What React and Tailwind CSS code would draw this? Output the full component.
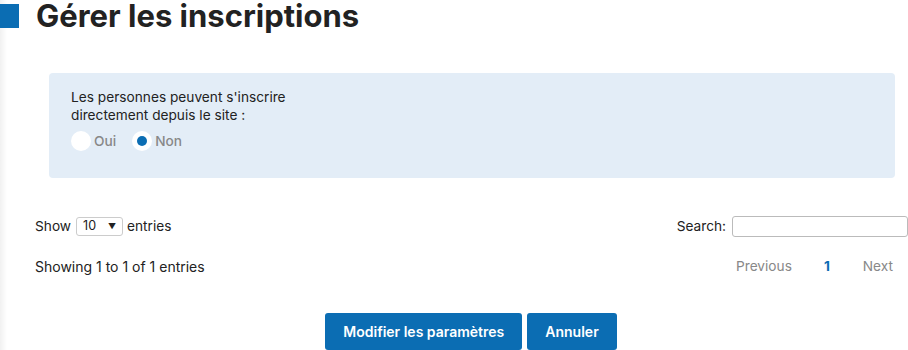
export default function App() {
  return (
    <div className="w-[908px] h-[350px] overflow-hidden bg-white relative text-[#222]" style={{ fontFamily: "Inter, 'Noto Sans', sans-serif" }}>
      <div className="absolute left-0 top-0 bottom-0 w-[7px] bg-gradient-to-r from-[#f1f1f1] to-white" />
      <div className="relative">
        <div className="flex items-center h-[32px]">
          <div className="w-[19px] h-[24px] bg-[#0b6db3]" />
          <h1 className="ml-[17px] text-[31px] font-bold text-[#222] leading-[32px]">Gérer les inscriptions</h1>
        </div>
        <div className="ml-[49px] mr-[13px] mt-[41px] h-[105px] rounded-[4px] bg-[#e3edf7] pl-[22px] pt-[15px]">
          <p className="text-[13.7px] leading-[18px] text-[#222]">Les personnes peuvent s'inscrire<br />directement depuis le site :</p>
          <div className="flex items-center mt-[7px] text-[13.7px] font-medium text-[#888]">
            <span className="w-[20px] h-[20px] rounded-full bg-white" />
            <span className="ml-[3px]">Oui</span>
            <span className="ml-[16px] w-[20px] h-[20px] rounded-full bg-white flex items-center justify-center">
              <span className="w-[10px] h-[10px] rounded-full bg-[#0b6db3]" />
            </span>
            <span className="ml-[3px]">Non</span>
          </div>
        </div>
        <div className="flex items-center justify-between pl-[35px] mt-[38px] text-[13.7px] text-[#222]">
          <div className="flex items-center">
            <span>Show</span>
            <div className="ml-[5px] w-[47px] h-[19px] border border-[#ccc] rounded-[3px] flex items-center justify-between pl-[6px] pr-[6px] text-[12.5px]">
              <span>10</span>
              <span className="text-[8px]">▼</span>
            </div>
            <span className="ml-[4px]">entries</span>
          </div>
          <div className="flex items-center">
            <span>Search:</span>
            <div className="ml-[6px] w-[176px] h-[21px] border border-[#bbb] rounded-[3px]" />
          </div>
        </div>
        <div className="flex items-center justify-between pl-[35px] mt-[19px] text-[13.7px]">
          <span className="text-[#222] text-[14px]">Showing 1 to 1 of 1 entries</span>
          <div className="flex items-center text-[#888] pr-[15px]">
            <span>Previous</span>
            <span className="ml-[32px] font-bold text-[#0b6db3]">1</span>
            <span className="ml-[33px]">Next</span>
          </div>
        </div>
        <div className="flex justify-center gap-[5px] mt-[36px] pl-[34px]">
          <button className="h-[37px] px-[18px] rounded-[3px] bg-[#0b6db3] text-white text-[14px] font-semibold">Modifier les paramètres</button>
          <button className="h-[37px] px-[18px] rounded-[3px] bg-[#0b6db3] text-white text-[14px] font-semibold">Annuler</button>
        </div>
      </div>
    </div>
  );
}
